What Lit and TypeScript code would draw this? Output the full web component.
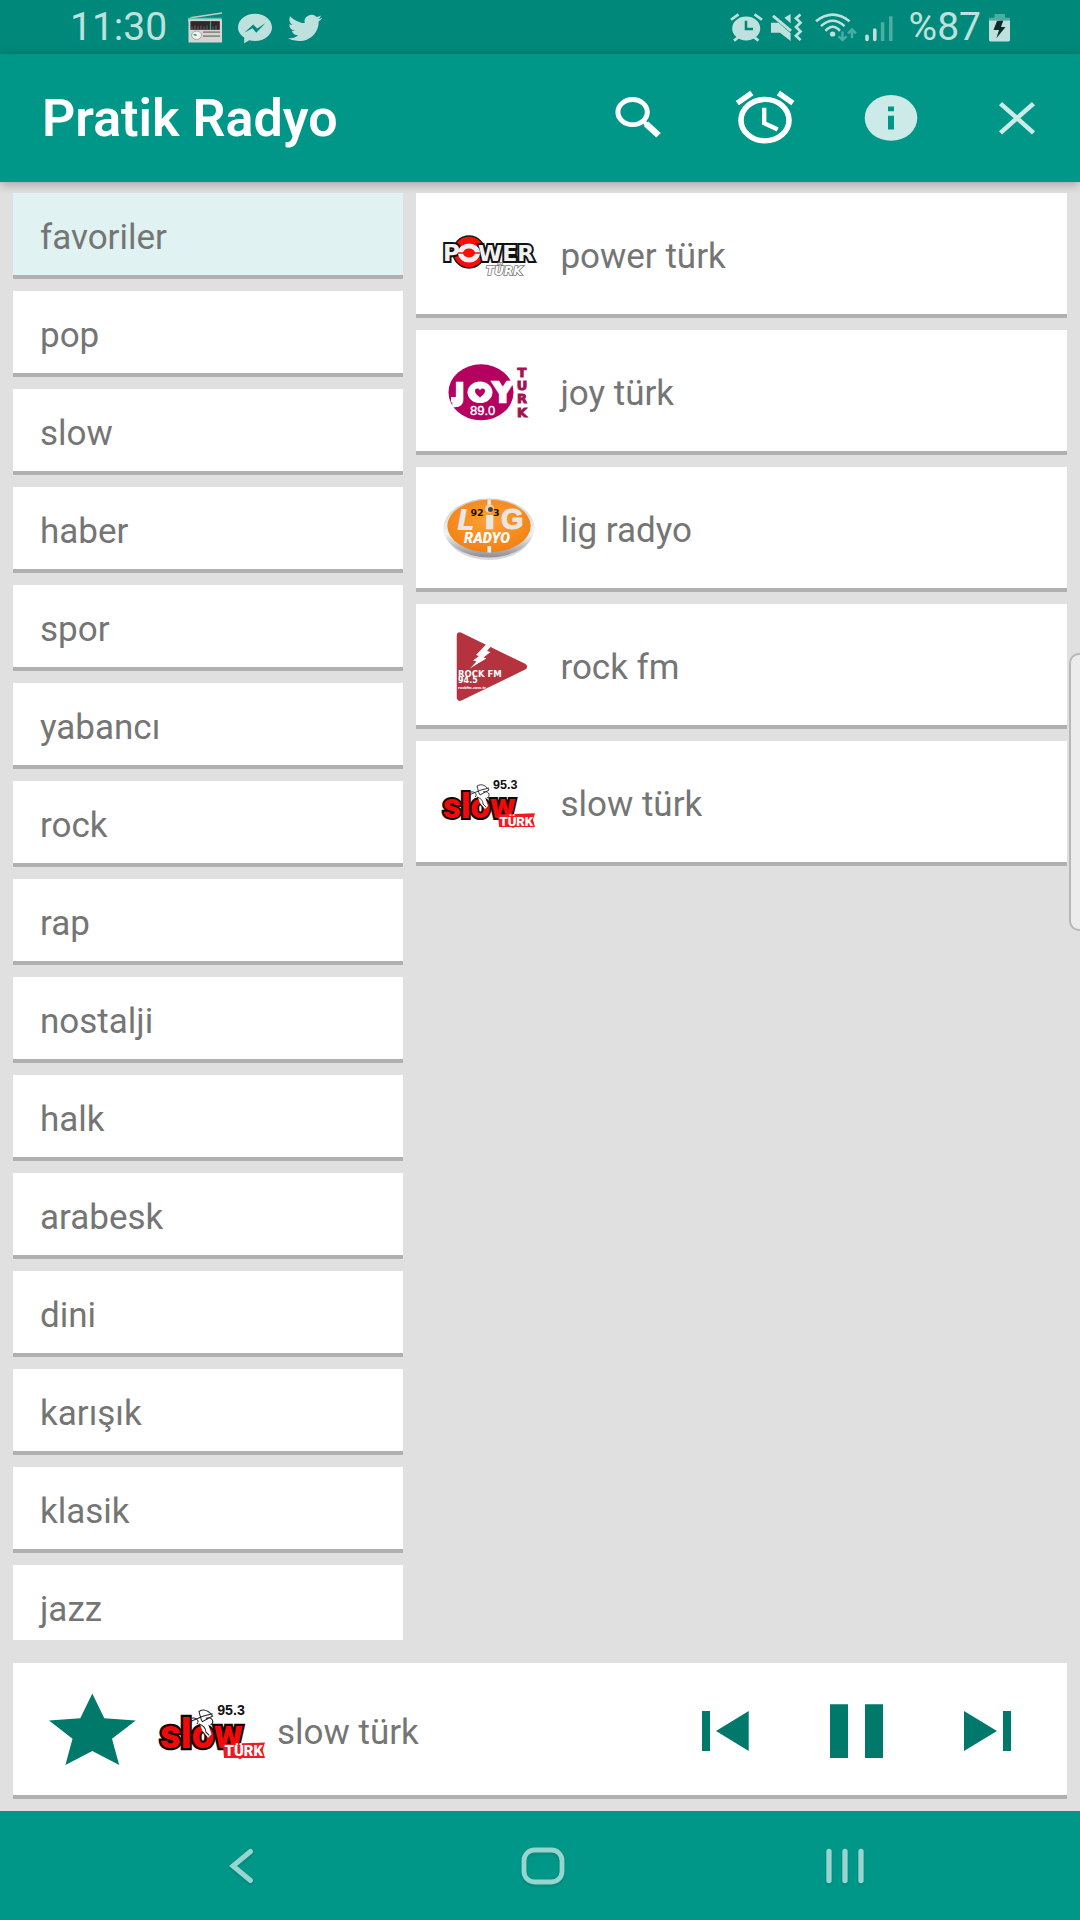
import { LitElement, html, css, svg, TemplateResult } from "lit";
import { customElement, property, state } from "lit/decorators.js";
import { classMap } from "lit/directives/class-map.js";

type StationId = "power" | "joy" | "lig" | "rock" | "slow";

interface Station {
  id: StationId;
  name: string;
}

const CATEGORIES = [
  "favoriler", "pop", "slow", "haber", "spor", "yabancı", "rock", "rap",
  "nostalji", "halk", "arabesk", "dini", "karışık", "klasik", "jazz",
];

const STATIONS: Station[] = [
  { id: "power", name: "power türk" },
  { id: "joy", name: "joy türk" },
  { id: "lig", name: "lig radyo" },
  { id: "rock", name: "rock fm" },
  { id: "slow", name: "slow türk" },
];

const LOGOS: Record<StationId, TemplateResult> = {
  power: svg`
    <circle cx="28" cy="39" r="16" fill="#fb0d06" stroke="#1a1a1a" stroke-width="1.500" />
    <text class="wide" x="2" y="48" font-size="23" fill="#f1f1f1" stroke="#111" stroke-width="4" paint-order="stroke">P</text>
    <text class="wide" x="37" y="48" font-size="22" fill="#f1f1f1" stroke="#111" stroke-width="4" paint-order="stroke">WER</text>
    <ellipse cx="28" cy="40" rx="8.500" ry="7" fill="none" stroke="#f1f1f1" stroke-width="5" />
    <path d="M17 40H24M32 40H39" stroke="#fb0d06" stroke-width="1.500" />
    <text class="wide slant" x="45" y="61.500" font-size="12" fill="#fff" stroke="#777" stroke-width="1.600" paint-order="stroke">TÜRK</text>`,
  joy: svg`
    <ellipse cx="40" cy="42.300" rx="32.500" ry="28" fill="#b4005f" />
    <text class="wide" x="14" y="51" font-size="25" fill="#fff" stroke="#fff" stroke-width="2.500">J</text>
    <path d="M10 47v5.300h6V47z" fill="#fff" />
    <ellipse cx="39" cy="42.300" rx="12.500" ry="10.800" fill="#fff" />
    <text class="wide" x="52" y="51.500" font-size="27" fill="#fff" stroke="#fff" stroke-width="2.500">Y</text>
    <path d="M39 47.500C35.500 44.500 34 43 34 41c0-2.700 3.700-3.300 5-.8 1.300-2.500 5-1.900 5 .8 0 2-1.500 3.500-5 6.500z" fill="#b4005f" />
    <text class="plain" x="29" y="64.500" font-size="13" fill="#fff" stroke="#fff" stroke-width=".4">89.0</text>
    <g class="wide" font-size="13" fill="#a3124f" stroke="#a3124f" stroke-width="1" text-anchor="middle">
      <text x="81" y="27">T</text><text x="81" y="40">U</text><text x="81" y="53">R</text><text x="81" y="67">K</text>
    </g>`,
  lig: svg`
    <defs>
      <linearGradient id="rim" x1="0" y1="0" x2="0" y2="1"><stop offset="0" stop-color="#c9c9c9" /><stop offset=".6" stop-color="#f2f2f2" /><stop offset="1" stop-color="#8d8d92" /></linearGradient>
      <radialGradient id="field" cx=".5" cy=".4" r=".7"><stop offset="0" stop-color="#ffa033" /><stop offset="1" stop-color="#f07c10" /></radialGradient>
    </defs>
    <ellipse cx="48" cy="43" rx="44" ry="30" fill="#d8d8dc" />
    <ellipse cx="48" cy="41" rx="45.700" ry="29.500" fill="url(#rim)" />
    <ellipse cx="48" cy="39" rx="41.700" ry="26.300" fill="url(#field)" />
    <path d="M46.500 12.500h3.400v9h-3.400zM46.500 59h3.600v6.500h-3.600z" fill="#f5efe6" />
    <text class="wide slant" x="16" y="42.500" font-size="28" fill="#e9e6e3">L</text>
    <path d="M45 28h7.300v14.300H45z" fill="#e9e6e3" />
    <text class="plain black" x="60" y="42" font-size="29" fill="#e9e6e3" stroke="#e9e6e3">G</text>
    <circle cx="48.500" cy="21.500" r="4.300" fill="#ecd2b4" />
    <circle cx="49.500" cy="22.500" r="2.500" fill="#444" />
    <text class="wide" x="29.500" y="29" font-size="9.500" fill="#17120c">92</text>
    <text class="wide" x="52" y="29" font-size="9.500" fill="#17120c">3</text>
    <text class="round slant" x="23" y="56" font-size="14.500" fill="#fff">RADYO</text>`,
  rock: svg`
    <path d="M19 11.600L82.700 42.700 19 73.700z" fill="#b5333f" stroke="#b5333f" stroke-width="6.500" stroke-linejoin="round" />
    <path d="M45 20.500l4.500 2.200-3.500 4.300 3.500 1-7 5.500 3 1-7 4-9.500 6 6.500-7-3.500-1 6-4.500-3-1z" fill="#fff" />
    <text class="wide" x="17" y="52.500" font-size="8.500" fill="#fff">ROCK FM</text>
    <text class="wide" x="17" y="59" font-size="8" fill="#fff">94.5</text>
    <text class="wide" x="17" y="64.500" font-size="3.500" fill="#fff">rockfm.com.tr</text>`,
  slow: svg`
    <text class="round" x="2" y="57" font-size="35" fill="#f00a0a" stroke="#160404" stroke-width="4" paint-order="stroke">slow</text>
    <path d="M35 31l8 2 4 12-3 3-5-6z" fill="#fff" />
    <g fill="none" stroke="#222" stroke-width=".9">
      <path d="M36 25c5-3 9 0 12 4l-9 5c-2-3-2-6-3-9zM28 34l12-5 8-2M30 31c4-1 7 3 4 5M42 31c6-2 8 4 4 6M36 36c3 1 6 3 6 7l3 3" />
    </g>
    <text class="plain black" x="52" y="28" font-size="12.500" fill="#111">95.3</text>
    <path d="M57 53.500l37-1.200-2 6.500 2 7.200H74l-2 1-2-1H58z" fill="#ee1c22" />
    <text class="round" x="58.500" y="64.500" font-size="13" fill="#fff">TÜRK</text>`,
};

@customElement("station-logo")
export class StationLogo extends LitElement {
  @property() station: StationId = "power";

  static styles = css`
    :host { display: block; flex: none; width: 94px; }
    .logo { display: block; width: 100%; height: auto; overflow: visible; }
    .wide { font-family: "DejaVu Sans", sans-serif; font-weight: 700; }
    .plain { font-family: "Liberation Sans", sans-serif; }
    .round { font-family: Roboto, sans-serif; font-weight: 900; }
    .black { font-weight: 700; }
    .slant { font-style: italic; }
  `;

  render() {
    return html`<svg class="logo" viewBox="0 0 94 81" aria-hidden="true">${LOGOS[this.station]}</svg>`;
  }
}

@customElement("status-bar")
export class StatusBar extends LitElement {
  static styles = css`
    :host {
      display: flex;
      align-items: center;
      justify-content: space-between;
      height: 54px;
      padding: 0 70px;
      background: #00897b;
      color: #bfe1de;
      font: 39px/54px Roboto, sans-serif;
    }
    .group { display: flex; align-items: center; }
    .notices { gap: 16px; }
    .system { gap: 8px; }
    .time { margin-right: 4px; }
    .icon { display: block; height: 31px; overflow: visible; }
  `;

  render() {
    return html`
      <div class="group notices">
        <span class="time">11:30</span>
        <svg class="icon" preserveAspectRatio="none" width="35" viewBox="0 0 35 32">
          <path d="M3.500 6L35 1" stroke="#c9c9c4" stroke-width="1.500" />
          <path d="M1 6h33.500v4H1z" fill="#5fc4b4" />
          <path d="M1.500 7.600H35V31.500H1.500z" fill="#d5d5d3" />
          <path d="M3.400 9.400h29.400v9H3.400z" fill="#2f272a" />
          <path d="M5 18v-3M8 18v-4M11 18v-3M14 18v-4M17 18v-3M20 18v-4M26 18v-3M29 18v-4" stroke="#8c8585" stroke-width=".7" />
          <path d="M23.500 9.500v9" stroke="#2fae8d" stroke-width="1.200" />
          <ellipse cx="9.600" cy="24" rx="5" ry="4.300" fill="#f2f2f0" stroke="#9a9a98" stroke-width=".9" />
          <path d="M9.600 24l-3-.8" stroke="#12a08c" stroke-width="1.400" />
          <path d="M16 20.800h17M16 25h17" stroke="#8b8b8b" stroke-width="1.800" />
        </svg>
        <svg class="icon" preserveAspectRatio="none" width="34" viewBox="0 0 34 32">
          <path d="M17 1.800c9.400 0 17 6.300 17 14.100s-7.600 14-17 14c-2 0-4-.3-5.700-.8L6.200 32.300v-6C2.400 23.800 0 20 0 15.900 0 8.100 7.600 1.800 17 1.800z" fill="currentColor" />
          <path d="M6.200 21.400l9-8.600 4.100 4.300 8.200-5.700-9.200 10-3.800-4.600z" fill="#00897b" />
        </svg>
        <svg class="icon" preserveAspectRatio="none" width="34" viewBox="0 0 34 32">
          <path transform="scale(1.420 1.380)" fill="currentColor" d="M23.953 4.570a10 10 0 01-2.825.775 4.958 4.958 0 002.163-2.723c-.951.555-2.005.959-3.127 1.184a4.920 4.920 0 00-8.384 4.482C7.690 8.095 4.067 6.130 1.640 3.162a4.822 4.822 0 00-.666 2.475c0 1.710.870 3.213 2.188 4.096a4.904 4.904 0 01-2.228-.616v.060a4.923 4.923 0 003.946 4.827 4.996 4.996 0 01-2.212.085 4.936 4.936 0 004.604 3.417 9.867 9.867 0 01-6.102 2.105c-.390 0-.779-.023-1.170-.067a13.995 13.995 0 007.557 2.209c9.053 0 13.998-7.496 13.998-13.985 0-.210 0-.420-.015-.630A9.935 9.935 0 0024 4.590z" />
        </svg>
      </div>
      <div class="group system">
        <svg class="icon" preserveAspectRatio="none" width="33" viewBox="0 0 33 32">
          <ellipse cx="16.200" cy="17" rx="14" ry="12.300" fill="currentColor" />
          <path d="M1 8l7.500-5.500M24.500 2.500L32 8M4 29.500l5-4M28.500 29.500l-5-4" stroke="currentColor" stroke-width="2.800" />
          <path d="M16 9v8.500h7" fill="none" stroke="#00897b" stroke-width="2.600" />
        </svg>
        <svg class="icon" preserveAspectRatio="none" width="31" viewBox="0 0 31 32">
          <path d="M0 11h7.500L19.600 22v8L9 21.500H0zM13.400 6l6.200-4v9.500z" fill="currentColor" />
          <path d="M2 4l18 15.500" stroke="currentColor" stroke-width="2.800" />
          <path d="M29.500 2.500l-4.500 4 4.500 4.500-4.500 4.500 4.500 4.500-4.500 4.500 4.500 4.500" fill="none" stroke="currentColor" stroke-width="2.800" />
        </svg>
        <svg class="icon" preserveAspectRatio="none" width="47" viewBox="-5 0 47 32">
          <g fill="none" stroke="currentColor" stroke-width="2.600">
            <path d="M1 9.500Q17.700-4 34.500 9.500M6 14.500Q17.700 3.500 29.500 14.500M10.500 19.500Q17.700 11 25 19.500" />
          </g>
          <circle cx="17.600" cy="22.700" r="2.700" fill="currentColor" />
          <path d="M27.500 20v8.500M23.500 25l4 4 4-4M37 27v-8.500M33 22l4-4 4 4" fill="none" stroke="#4dada3" stroke-width="2.400" />
        </svg>
        <svg class="icon" preserveAspectRatio="none" width="36" viewBox="0 0 36 32">
          <path d="M2 25V28.500M9.800 18.500V28.500" stroke="currentColor" stroke-width="3.600" stroke-linecap="round" />
          <path d="M17.600 10.500V30M25.800 4.500V30" stroke="#4dada3" stroke-width="3.500" />
        </svg>
        <span>%87</span>
        <svg class="icon" preserveAspectRatio="none" width="21" viewBox="0 0 21 32">
          <path d="M0 6h5.500V2H16v4h5v3H0z" fill="#4dada3" />
          <path d="M0 8.700h21v20.300q0 1.500-1.500 1.500h-18Q0 30.500 0 29z" fill="currentColor" />
          <path d="M8 9.300l6.300-.6-2.300 6.800h4.500L7.400 27 10 18.500H4.500z" fill="#0a2f2a" />
        </svg>
      </div>
    `;
  }
}

@customElement("app-root")
export class AppRoot extends LitElement {
  @state() private category = "favoriler";
  @state() private playing: Station = STATIONS[4];

  static styles = css`
    :host { display: block; font-family: Roboto, sans-serif; }
    .page {
      position: relative;
      display: flex;
      flex-direction: column;
      height: 100vh;
      overflow: hidden;
      background: #e0e0e0;
      color: #757575;
    }
    button {
      display: flex;
      align-items: center;
      border: 0;
      margin: 0;
      padding: 0;
      background: none;
      color: inherit;
      font: inherit;
      text-align: left;
      cursor: pointer;
    }
    svg { display: block; }
    .bar {
      display: flex;
      align-items: flex-start;
      flex: none;
      height: 128px;
      padding-left: 42px;
      background: #009688;
      color: #fff;
      box-shadow: 0 2px 10px rgba(0, 0, 0, 0.3);
    }
    .title { flex: 1; margin: 0; padding-top: 35px; font-size: 52px; line-height: 60px; font-weight: 600; }
    .soft { color: #cceae7; }
    .columns {
      display: grid;
      grid-template-columns: 3fr 5fr;
      gap: 13px;
      flex: 1;
      min-height: 0;
      margin: 11px 13px 23px;
    }
    .list {
      display: flex;
      flex-direction: column;
      gap: 12px;
      min-height: 0;
      margin: 0;
      padding: 0;
      overflow-y: auto;
      scrollbar-width: none;
      list-style: none;
    }
    .item { flex: none; }
    .card { background: #fff; border-bottom: 4px solid #b0b0b0; }
    .row { width: 100%; box-sizing: border-box; padding: 0 25px; font-size: 35px; line-height: 40px; }
    .category { height: 86px; padding: 0 27px; }
    .selected { background: #e0f2f1; }
    .station { height: 125px; gap: 25px; }
    .name { padding-top: 7px; }
    .player {
      display: flex;
      align-items: center;
      flex: none;
      height: 132px;
      margin: 0 13px 12px;
      padding-right: 14px;
    }
    .player-logo { width: 107px; }
    .now { flex: 1; padding: 7px 0 0 12px; font-size: 35px; line-height: 40px; }
    .control { color: #00796b; }
    .system-nav {
      display: grid;
      grid-template-columns: repeat(3, 1fr);
      flex: none;
      height: 109px;
      box-sizing: border-box;
      padding: 0 84px 0 90px;
      background: #009688;
      color: #99d5cf;
    }
    .nav-button { justify-content: center; }
    .nav-icon { filter: drop-shadow(0 2px 1px rgba(0, 0, 0, 0.1)); }
    .edge-handle {
      position: absolute;
      right: 0;
      top: 34%;
      width: 11px;
      height: 278px;
      box-sizing: border-box;
      border: 2px solid #b8b8b8;
      border-right: 0;
      border-radius: 10px 0 0 10px;
      background: #ececec;
    }
  `;

  render() {
    return html`
      <div class="page">
        <status-bar></status-bar>
        <header class="bar">
          <h1 class="title">Pratik Radyo</h1>
          <button aria-label="Ara">
            <svg width="126" height="122" viewBox="0 0 126 126" preserveAspectRatio="none" fill="none" stroke="currentColor">
              <ellipse cx="56.600" cy="60" rx="14.700" ry="13" stroke-width="5" />
              <path d="M67 69l4 4" stroke-width="4" />
              <path d="M70 72l12.500 12" stroke-width="6.500" />
            </svg>
          </button>
          <button aria-label="Alarm">
            <svg width="126" height="122" viewBox="0 0 126 126" preserveAspectRatio="none" fill="none" stroke="currentColor">
              <ellipse cx="63" cy="68.300" rx="24" ry="21.400" stroke-width="5.600" />
              <path d="M62.200 55.500v16l13.500 6.500" stroke-width="4.400" />
              <path d="M35.300 50.700l14.500-10.400M76.400 40.300l14.500 10.400" stroke-width="5.600" />
            </svg>
          </button>
          <button class="soft" aria-label="Bilgi">
            <svg width="126" height="122" viewBox="0 0 126 126" preserveAspectRatio="none">
              <ellipse cx="63" cy="66" rx="26.300" ry="23.700" fill="currentColor" />
              <path d="M60 54.200h6V59h-6zM60 63.700h6V78h-6z" fill="#009688" />
            </svg>
          </button>
          <button class="soft" aria-label="Kapat">
            <svg width="126" height="122" viewBox="0 0 126 126" preserveAspectRatio="none">
              <path d="M46.500 51.200l33 30.200M79.500 51.200l-33 30.200" stroke="currentColor" stroke-width="4.600" />
            </svg>
          </button>
        </header>

        <main class="columns">
          <ul class="list">
            ${CATEGORIES.map(
              (name) => html`<li class="item">
                <button
                  class=${classMap({ card: true, row: true, category: true, selected: name === this.category })}
                  @click=${() => (this.category = name)}
                ><span class="name">${name}</span></button>
              </li>`
            )}
          </ul>
          <ul class="list">
            ${STATIONS.map(
              (s) => html`<li class="item">
                <button class="card row station" @click=${() => (this.playing = s)}>
                  <station-logo .station=${s.id}></station-logo>
                  <span class="name">${s.name}</span>
                </button>
              </li>`
            )}
          </ul>
        </main>

        <section class="card player">
          <button class="control" aria-label="Favori">
            <svg width="145" height="132" viewBox="0 0 145 136" preserveAspectRatio="none">
              <path fill="currentColor" d="M79.300 31.400l12 25.600 31.400 2.300L99 78l7.200 27.200-26.900-14.500-26.900 14.500L59.500 78 36 59.300 67.300 57z" />
            </svg>
          </button>
          <station-logo class="player-logo" .station=${this.playing.id}></station-logo>
          <span class="now">${this.playing.name}</span>
          <button class="control" aria-label="Önceki">
            <svg width="131" height="132" viewBox="0 0 131 136" preserveAspectRatio="none"><path fill="currentColor" d="M42 49.400h8v41.300h-8zM88.700 49.400v41.300L56 70z" /></svg>
          </button>
          <button class="control" aria-label="Duraklat">
            <svg width="131" height="132" viewBox="0 0 131 136" preserveAspectRatio="none"><path fill="currentColor" d="M39 42.500h18V98H39zM74 42.500h18V98H74z" /></svg>
          </button>
          <button class="control" aria-label="Sonraki">
            <svg width="131" height="132" viewBox="0 0 131 136" preserveAspectRatio="none"><path fill="currentColor" d="M42 49.400L75 70 42 90.700zM81 49.400h8v41.300h-8z" /></svg>
          </button>
        </section>

        <nav class="system-nav">
          <button class="nav-button" aria-label="Geri">
            <svg class="nav-icon" width="50" height="42" viewBox="0 0 50 42" fill="none" stroke="currentColor" stroke-width="5" stroke-linecap="round">
              <path d="M34.500 6.500L17 21l17.500 14.500" />
            </svg>
          </button>
          <button class="nav-button" aria-label="Ana ekran">
            <svg class="nav-icon" width="50" height="42" viewBox="0 0 50 42" fill="none" stroke="currentColor" stroke-width="4.800">
              <rect x="6" y="5" width="38" height="32" rx="10.500" />
            </svg>
          </button>
          <button class="nav-button" aria-label="Son uygulamalar">
            <svg class="nav-icon" width="50" height="42" viewBox="0 0 50 42" fill="none" stroke="currentColor" stroke-width="5.300" stroke-linecap="round">
              <path d="M9 6.500v29M25 6.500v29M41 6.500v29" />
            </svg>
          </button>
        </nav>
        <div class="edge-handle"></div>
      </div>
    `;
  }
}
